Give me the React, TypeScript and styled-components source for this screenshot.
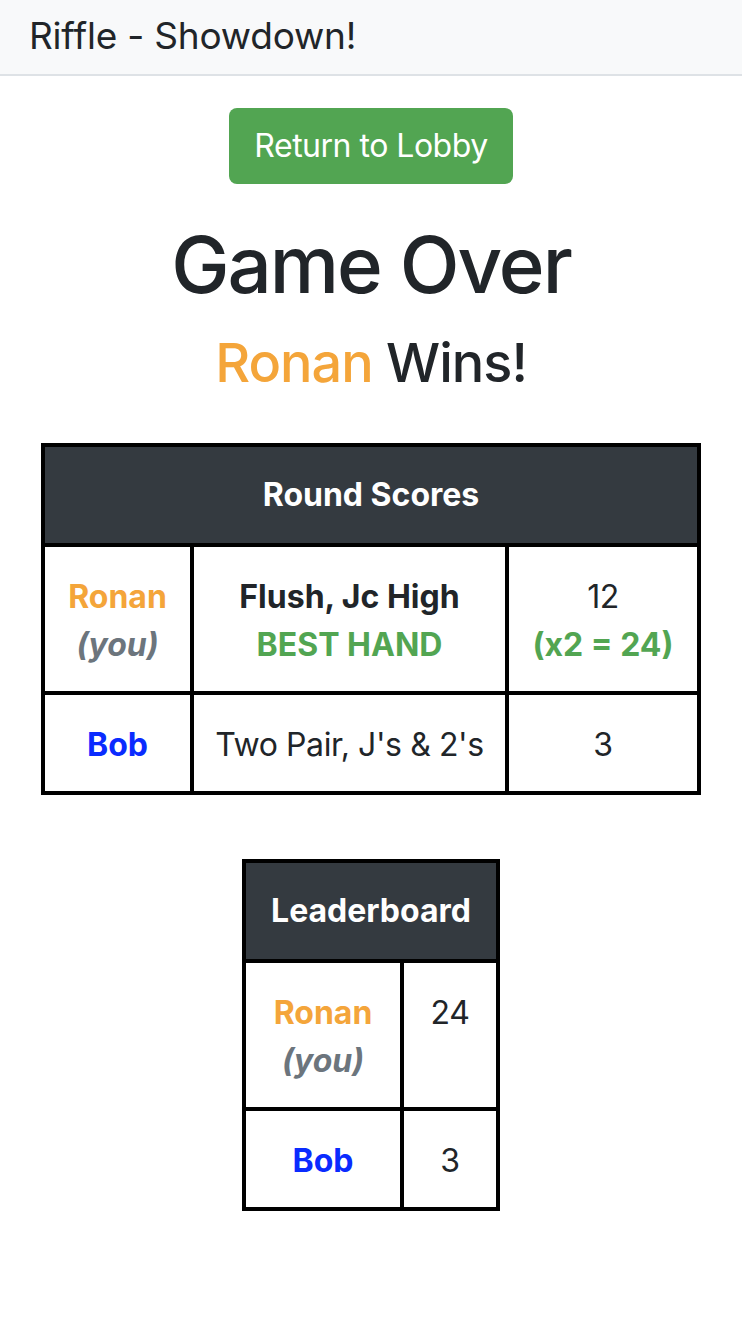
import React from "react";
import styled, { createGlobalStyle } from "styled-components";

const Global = createGlobalStyle`
  html, body { margin: 0; padding: 0; background: #fff; }
  body { font-family: Inter, "Noto Sans", "Liberation Sans", sans-serif; color: #212529; }
  * { box-sizing: border-box; }
`;

const NavBar = styled.header`
  height: 76px;
  background: #f8f9fa;
  border-bottom: 2px solid #dee2e6;
  display: flex;
  align-items: center;
  padding: 0 29px;
`;

const Brand = styled.div`
  font-size: 37px;
  color: #212529;
  line-height: 1;
  letter-spacing: -0.2px;
  margin-top: -4px;
`;

const Main = styled.main`
  display: flex;
  flex-direction: column;
  align-items: center;
  padding: 32px 41px 80px;
`;

const LobbyButton = styled.button`
  width: 284px;
  height: 76px;
  background: #52a552;
  color: #fff;
  border: none;
  border-radius: 8px;
  font-family: inherit;
  font-size: 32px;
  line-height: 48px;
  letter-spacing: -0.5px;
  cursor: pointer;
`;

const Title = styled.h1`
  margin: 34px 0 0;
  font-size: 78px;
  font-weight: 500;
  line-height: 1.2;
  letter-spacing: -2px;
  color: #212529;
`;

const Subtitle = styled.h2`
  margin: 19px 0 0;
  font-size: 54px;
  font-weight: 500;
  line-height: 1.2;
  letter-spacing: -1px;
  color: #212529;
`;

const Winner = styled.span`
  color: #f4a53a;
`;

const ScoreTable = styled.table<{ $top: number; $full?: boolean }>`
  margin-top: ${(p) => p.$top}px;
  border-collapse: collapse;
  border: 4px solid #000;
  width: ${(p) => (p.$full ? "100%" : "auto")};
  font-size: 32px;
  line-height: 48px;
  text-align: center;
  white-space: nowrap;
`;

const HeadCell = styled.th`
  background: #343a40;
  color: #fff;
  font-weight: 700;
  padding: 24px;
  border: 4px solid #000;
  height: 98px;
`;

const Cell = styled.td<{ $w?: number }>`
  border: 4px solid #000;
  padding: 26px 20px 22px;
  vertical-align: top;
  letter-spacing: -0.4px;
  width: ${(p) => (p.$w ? `${p.$w}px` : "auto")};
`;

const Name = styled.div<{ $c: string }>`
  font-weight: 700;
  letter-spacing: 0;
  color: ${(p) => p.$c};
`;

const You = styled.div`
  font-weight: 700;
  font-style: italic;
  letter-spacing: 0;
  color: #6c757d;
`;

const Strong = styled.div`
  font-weight: 700;
  letter-spacing: 0;
`;

const Good = styled.div`
  font-weight: 700;
  letter-spacing: 0;
  color: #52a552;
`;

const ORANGE = "#f4a53a";
const BLUE = "#0a2bff";

export default function App() {
  return (
    <>
      <Global />
      <NavBar>
        <Brand>Riffle - Showdown!</Brand>
      </NavBar>
      <Main>
        <LobbyButton>Return to Lobby</LobbyButton>
        <Title>Game Over</Title>
        <Subtitle>
          <Winner>Ronan</Winner> Wins!
        </Subtitle>
        <ScoreTable $top={48} $full>
          <thead>
            <tr>
              <HeadCell colSpan={3}>Round Scores</HeadCell>
            </tr>
          </thead>
          <tbody>
            <tr>
              <Cell $w={149}>
                <Name $c={ORANGE}>Ronan</Name>
                <You>(you)</You>
              </Cell>
              <Cell $w={315}>
                <Strong>Flush, Jc High</Strong>
                <Good>BEST HAND</Good>
              </Cell>
              <Cell>
                <div>12</div>
                <Good>(x2 = 24)</Good>
              </Cell>
            </tr>
            <tr>
              <Cell>
                <Name $c={BLUE}>Bob</Name>
              </Cell>
              <Cell>Two Pair, J's &amp; 2's</Cell>
              <Cell>3</Cell>
            </tr>
          </tbody>
        </ScoreTable>
        <ScoreTable $top={64}>
          <thead>
            <tr>
              <HeadCell colSpan={2}>Leaderboard</HeadCell>
            </tr>
          </thead>
          <tbody>
            <tr>
              <Cell $w={158}>
                <Name $c={ORANGE}>Ronan</Name>
                <You>(you)</You>
              </Cell>
              <Cell $w={96}>24</Cell>
            </tr>
            <tr>
              <Cell>
                <Name $c={BLUE}>Bob</Name>
              </Cell>
              <Cell>3</Cell>
            </tr>
          </tbody>
        </ScoreTable>
      </Main>
    </>
  );
}
